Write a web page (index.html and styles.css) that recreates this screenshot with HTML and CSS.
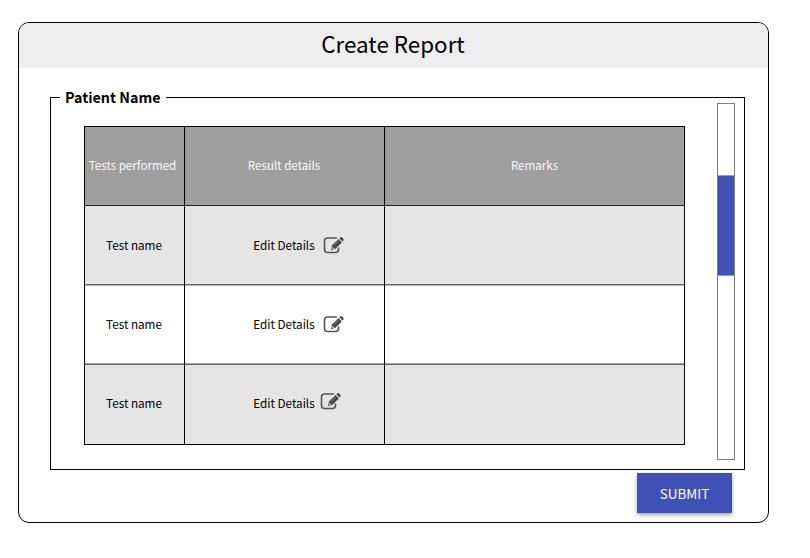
FILE: index.html
```html
<!DOCTYPE html>
<html lang="en">
<head>
<meta charset="utf-8">
<title>Create Report</title>
<link rel="stylesheet" href="styles.css">
</head>
<body>
<svg class="defs" width="0" height="0" aria-hidden="true">
  <symbol id="edit" viewBox="0 0 22 18">
    <path d="M13.300 2H4.500Q1.500 2 1.500 5v8.500q0 3 3 3H12.500q3 0 3-3v-1.500" fill="none" stroke="#555" stroke-width="1.600" stroke-linecap="round"/>
    <path d="M8 14.200l1.200-5L15.500 3l3.300 3.500-6.300 6.300z" fill="#444"/>
    <path d="M16.300 2.300l1.200-1.100q.7-.6 1.400.1l1.500 1.700q.7.8 0 1.500l-1 1z" fill="#444"/>
    <path d="M10.700 9.600L15.700 4.800" stroke="#aaa" stroke-width=".7"/>
    <path d="M9.400 10.700l2 2-2 .6z" fill="#ddd"/>
  </symbol>
</svg>
<main class="panel">
  <header class="title">Create Report</header>
  <fieldset class="patient">
    <legend>Patient Name</legend>
    <div class="content">
      <div class="table">
        <div class="row head"><div>Tests performed</div><div>Result details</div><div>Remarks</div></div>
        <div class="row shade"><div>Test name</div><div class="edit"><span>Edit Details</span><svg><use href="#edit"/></svg></div><div></div></div>
        <div class="row plain"><div>Test name</div><div class="edit"><span>Edit Details</span><svg><use href="#edit"/></svg></div><div></div></div>
        <div class="row shade last"><div>Test name</div><div class="edit"><span>Edit Details</span><svg><use href="#edit"/></svg></div><div></div></div>
      </div>
      <div class="scrollbar"><div class="thumb"></div></div>
    </div>
  </fieldset>
  <button class="submit" type="button">SUBMIT</button>
</main>
</body>
</html>
```
FILE: styles.css
```css
* { box-sizing: border-box; }
body {
  margin: 0;
  padding: 22px 18px;
  background: #fff;
  color: #000;
  font-family: "Noto Sans CJK SC", "Noto Sans", sans-serif;
}
.defs { display: block; }
.panel {
  width: 751px;
  height: 501px;
  border: 1px solid #000;
  border-radius: 11px;
  overflow: hidden;
  display: flex;
  flex-direction: column;
}
.title {
  height: 45px;
  flex: none;
  padding-right: 1px;
  background: #eee;
  font-size: 22.4px;
  line-height: 40px;
  text-align: center;
}
.patient {
  width: 695px;
  height: 385px;
  margin: 17px 0 0 31px;
  padding: 0;
  border: 1px solid #000;
}
.patient legend {
  height: 24px;
  margin-left: 9px;
  padding: 0 5px;
  width: 106px;
  font-size: 14.3px;
  font-weight: 700;
  line-height: 24px;
  white-space: nowrap;
}
.content {
  display: flex;
  gap: 32px;
  margin-left: 33px;
}
.table {
  width: 601px;
  margin-top: 17px;
  border: 1px solid #000;
  height: 319px;
}
.row {
  display: grid;
  grid-template-columns: 100px 200px 299px;
  height: 79px;
  font-size: 11.7px;
}
.row > div {
  display: flex;
  align-items: center;
  justify-content: center;
  padding: 0 1px 2px 0;
  border-right: 1px solid #000;
  white-space: nowrap;
}
.row > div:last-child { border-right: 0; padding-right: 0; }
.head { background: #9e9e9e; color: #fafafa; font-size: 11.6px; }
.head > div { box-shadow: inset 0 -1px #222; padding-bottom: 4px; }
.head > div:first-child { padding-right: 4px; }
.shade { background: #e5e5e5; }
.shade > div { box-shadow: inset 0 -1px #666; }
.plain > div { box-shadow: inset 0 -1px #a8a8a8; }
.plain > div:nth-child(n) { background: linear-gradient(#b8b8b8 1px, #fff 1px); }
.last { height: 80px; }
.last > div { box-shadow: inset 0 1px #666; padding-bottom: 3px; }
.row > .edit { gap: 8px; padding-left: 30px; }
.edit svg { width: 22px; height: 18px; }
.last .edit svg { position: relative; left: -3px; top: -2px; }
.scrollbar {
  width: 18px;
  height: 357px;
  margin-top: -6px;
  padding-top: 71px;
  border: 1px solid #7f7f7f;
}
.thumb {
  height: 101px;
  background: #3f51b5;
  border: solid #8f99d3;
  border-width: 1px 0;
}
.submit {
  width: 95px;
  height: 40px;
  margin: 3px 0 0 618px;
  padding: 0;
  border: 0;
  background: #3f51b5;
  color: #fff;
  font: 13.5px/41px "Noto Sans CJK SC", "Noto Sans", sans-serif;
  box-shadow: 0 2px 4px rgba(0, 0, 0, .35);
}
```
